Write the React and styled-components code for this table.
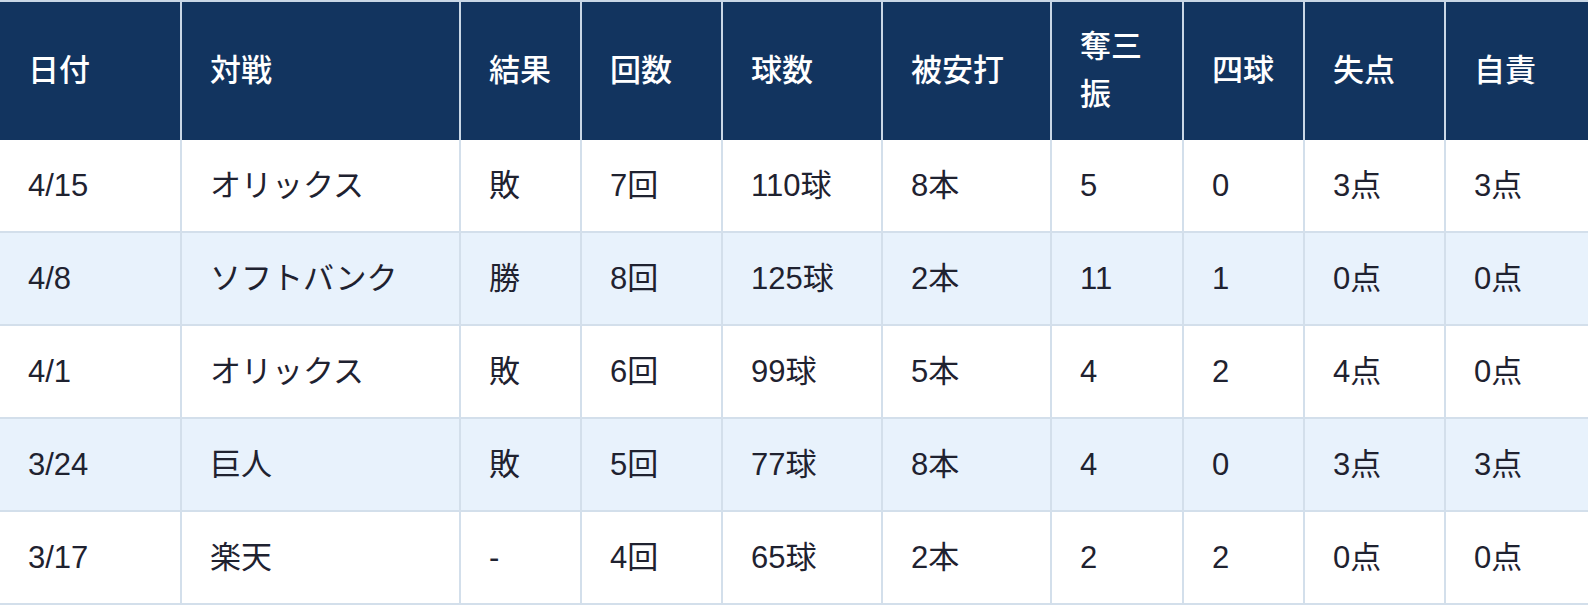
import React from "react";
import styled, { createGlobalStyle } from "styled-components";

const rows = [
  ["4/15", "オリックス", "敗", "7回", "110球", "8本", "5", "0", "3点", "3点"],
  ["4/8", "ソフトバンク", "勝", "8回", "125球", "2本", "11", "1", "0点", "0点"],
  ["4/1", "オリックス", "敗", "6回", "99球", "5本", "4", "2", "4点", "0点"],
  ["3/24", "巨人", "敗", "5回", "77球", "8本", "4", "0", "3点", "3点"],
  ["3/17", "楽天", "-", "4回", "65球", "2本", "2", "2", "0点", "0点"],
];

const headers = [
  ["日付", 181],
  ["対戦", 279],
  ["結果", 121],
  ["回数", 141],
  ["球数", 160],
  ["被安打", 169],
  ["奪三振", 132],
  ["四球", 121],
  ["失点", 141],
  ["自責", 161],
];

function App() {
  return (
    <>
      <GlobalStyle />
      <Table>
        <thead>
          <tr>
            {headers.map(([h, w]) => (
              <Th key={h} $w={w}>
                {h}
              </Th>
            ))}
          </tr>
        </thead>
        <tbody>
          {rows.map((r, i) => (
            <Row key={i} $alt={i % 2 === 1}>
              {r.map((c, j) => (
                <Td key={j}>{c}</Td>
              ))}
            </Row>
          ))}
        </tbody>
      </Table>
    </>
  );
}

const GlobalStyle = createGlobalStyle`
  html, body {
    overflow: hidden;
  }
  body {
    margin: 0;
    background: #fff;
    font-family: "Liberation Sans", "Noto Sans CJK JP", sans-serif;
  }
`;

const Table = styled.table`
  width: 1586px;
  table-layout: fixed;
  border-collapse: collapse;
  font-size: 31px;
  line-height: 48px;
  color: #1f2230;

  th:first-child,
  td:first-child {
    border-left: none;
  }
`;

const Th = styled.th`
  box-sizing: border-box;
  width: ${(p) => p.$w}px;
  background: #12345f;
  color: #fff;
  font-weight: 500;
  text-align: left;
  vertical-align: middle;
  padding: 21px 28px;
  border: 2px solid #c9d7e6;
  border-bottom: none;
`;

const Row = styled.tr`
  background: ${(p) => (p.$alt ? "#e8f2fc" : "#fff")};
`;

const Td = styled.td`
  padding: 22px 28px 21px;
  border: 2px solid #d3dfeb;
  border-top: none;
  white-space: nowrap;
`;

export default App;
